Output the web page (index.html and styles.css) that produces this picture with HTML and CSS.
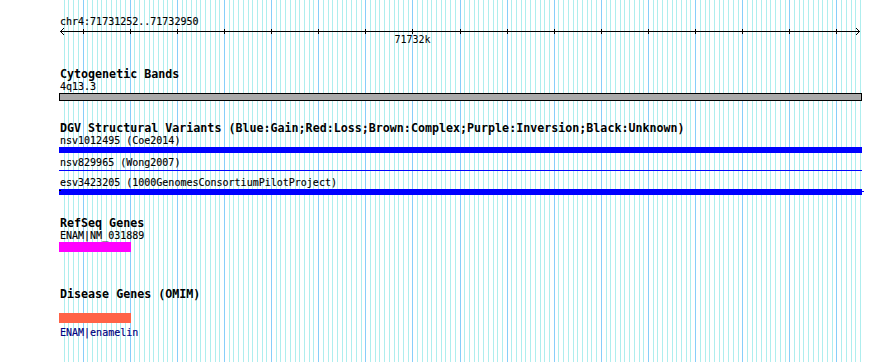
FILE: index.html
```html
<!DOCTYPE html>
<html>
<head>
<meta charset="utf-8">
<title>chr4:71731252..71732950</title>
<link rel="stylesheet" href="styles.css">
</head>
<body>
<div class="panel">
  <svg class="grid" id="grid" width="890" height="362" shape-rendering="crispEdges">
    <path id="grid-minor" class="grid-minor" d=""/>
    <path id="grid-major" class="grid-major" d=""/>
  </svg>
  <div class="tracks">
    <div class="small">chr4:71731252..71732950</div>
    <svg class="ruler" width="803" height="18">
      <path d="M1 3.5H801" class="ruler-line" shape-rendering="crispEdges"/>
      <path id="ruler-ticks" d="" class="ruler-line" shape-rendering="crispEdges"/>
      <path d="M5 0L1.5 3.5L5 7" class="ruler-arrow"/>
      <path d="M797 0L800.5 3.5L797 7" class="ruler-arrow"/>
      <text x="353.5" y="15" class="ruler-label" text-anchor="middle">71732k</text>
    </svg>

    <section class="track cyto">
      <div class="title">Cytogenetic Bands</div>
      <div class="small">4q13.3</div>
      <div class="band"></div>
    </section>

    <section class="track dgv">
      <div class="title">DGV Structural Variants (Blue:Gain;Red:Loss;Brown:Complex;Purple:Inversion;Black:Unknown)</div>
      <div class="small">nsv1012495 (Coe2014)</div>
      <div class="sv-bar"></div>
      <div class="small sv-gap1">nsv829965 (Wong2007)</div>
      <div class="sv-line"></div>
      <div class="small sv-gap2">esv3423205 (1000GenomesConsortiumPilotProject)</div>
      <div class="sv-bar sv-last"></div>
    </section>

    <section class="track refseq">
      <div class="title">RefSeq Genes</div>
      <div class="small">ENAM|NM_031889</div>
      <div class="gene gene-refseq"></div>
    </section>

    <section class="track omim">
      <div class="title">Disease Genes (OMIM)</div>
      <div class="gene gene-omim"></div>
      <div class="small omim-label">ENAM|enamelin</div>
    </section>
  </div>
</div>
<script src="script.js"></script>
</body>
</html>
```

FILE: styles.css
```css
html, body {
  margin: 0;
  padding: 0;
  background: #ffffff;
}

.panel {
  position: relative;
  width: 890px;
  height: 362px;
  overflow: hidden;
}

.grid {
  position: absolute;
  left: 0;
  top: 0;
}

.grid-minor {
  stroke: #aeeeee;
  stroke-width: 1;
  fill: none;
}

.grid-major {
  stroke: #87cefa;
  stroke-width: 1;
  fill: none;
}

.tracks {
  position: relative;
  margin-left: 59px;
  width: 803px;
  padding-top: 15px;
}

.small {
  position: relative;
  z-index: 1;
  font-family: "DejaVu Sans Mono", monospace;
  font-size: 10px;
  line-height: 13px;
  height: 13px;
  padding-left: 1px;
  white-space: nowrap;
  color: #000000;
  -webkit-text-stroke: 0.15px currentColor;
}

.title {
  font-family: "DejaVu Sans Mono", monospace;
  font-weight: bold;
  font-size: 11.67px;
  line-height: 12px;
  height: 12px;
  padding-left: 1px;
  white-space: nowrap;
  color: #000000;
}

.ruler {
  display: block;
}

.ruler-line {
  stroke: #000000;
  stroke-width: 1;
  fill: none;
}

.ruler-arrow {
  stroke: #000000;
  stroke-width: 1;
  fill: none;
}

.ruler-label {
  font-family: "DejaVu Sans Mono", monospace;
  font-size: 10px;
  fill: #000000;
}

.cyto {
  margin-top: 22px;
}

.band {
  height: 6px;
  width: 801px;
  background: #aaaaaa;
  border: 1px solid #000000;
}

.dgv {
  margin-top: 21px;
}

.sv-bar {
  height: 6px;
  width: 803px;
  background: #0000ff;
}

.sv-gap1 {
  margin-top: 3px;
}

.sv-line {
  margin-top: 1px;
  height: 1px;
  width: 803px;
  background: #0000ff;
}

.sv-gap2 {
  margin-top: 5px;
}

.sv-last {
  position: relative;
}

.sv-last::before {
  content: "";
  position: absolute;
  left: 0;
  top: 1px;
  width: 2px;
  height: 1px;
  background: #000000;
}

.sv-last::after {
  content: "";
  position: absolute;
  right: -2px;
  top: 2px;
  width: 2px;
  height: 1px;
  background: #0000ff;
}

.refseq {
  margin-top: 22px;
}

.gene {
  width: 72px;
  height: 10px;
}

.gene-refseq {
  background: #ff00ff;
}

.omim {
  margin-top: 36px;
}

.gene-omim {
  margin-top: 13px;
  background: #ff6347;
}

.omim-label {
  margin-top: 3px;
  color: #000080;
}
```

FILE: script.js
```js
(function () {
  var START = 71731252, END = 71732950;
  var scale = 800 / (END - START);
  function xOf(bp) { return 60 + (bp - START) * scale; }

  var minor = '', major = '', ticks = '';
  for (var bp = 71731260; bp <= END; bp += 10) {
    var col = Math.round(xOf(bp));
    var seg = 'M' + (col + 0.5) + ' 0V362';
    if (bp % 100 === 0) {
      major += seg;
      ticks += 'M' + (col - 59 + 0.5) + ' 1V6';
    } else {
      minor += seg;
    }
  }
  document.getElementById('grid-minor').setAttribute('d', minor);
  document.getElementById('grid-major').setAttribute('d', major);
  document.getElementById('ruler-ticks').setAttribute('d', ticks);
})();
```
